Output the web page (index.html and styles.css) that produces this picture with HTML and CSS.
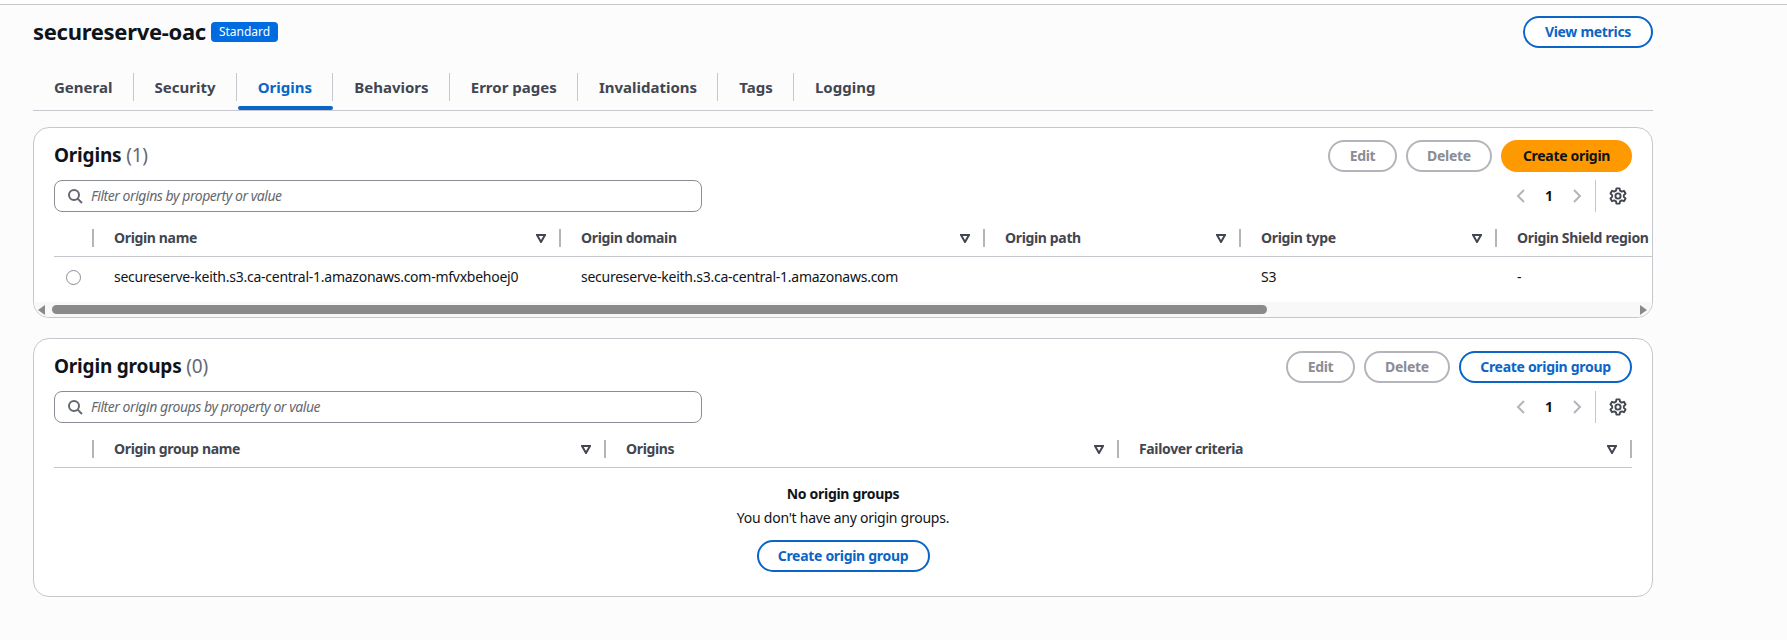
FILE: index.html
```html
<!DOCTYPE html>
<html lang="en">
<head>
    <meta charset="UTF-8">
    <title>secureserve-oac</title>
    <link rel="stylesheet" href="styles.css">
</head>
<body>
    <div class="top-line"></div>
    <div class="page">
        <div class="page-header">
            <div class="page-title">
                <h1>secureserve-oac</h1>
                <span class="badge">Standard</span>
            </div>
            <button class="btn btn-normal btn-metrics">View metrics</button>
        </div>

        <div class="tabs">
            <a class="tab">General</a>
            <a class="tab">Security</a>
            <a class="tab tab-active">Origins</a>
            <a class="tab">Behaviors</a>
            <a class="tab">Error pages</a>
            <a class="tab">Invalidations</a>
            <a class="tab">Tags</a>
            <a class="tab tab-last">Logging</a>
        </div>

        <!-- Origins -->
        <section class="card">
            <div class="card-head">
                <h2>Origins <span class="count">(1)</span></h2>
                <div class="actions">
                    <button class="btn btn-disabled btn-edit">Edit</button>
                    <button class="btn btn-disabled btn-delete">Delete</button>
                    <button class="btn btn-primary">Create origin</button>
                </div>
            </div>
            <div class="tools">
                <label class="filter">
                    <svg class="icon-search" viewBox="0 0 16 16"><circle cx="7" cy="7" r="5"/><path d="M10.6 10.6 15 15"/></svg>
                    <input type="text" placeholder="Filter origins by property or value">
                </label>
                <div class="pager">
                    <svg class="chevron" viewBox="0 0 16 16"><path d="M11 2 5 8l6 6"/></svg>
                    <span class="page-num">1</span>
                    <svg class="chevron" viewBox="0 0 16 16"><path d="m5 2 6 6-6 6"/></svg>
                    <span class="pager-sep"></span>
                    <svg class="icon-gear" viewBox="0 0 16 16"><path d="M6.6 1.2h2.800l.4 2 1.500.9 2-.7 1.400 2.400-1.500 1.400v1.600l1.500 1.400-1.400 2.400-2-.7-1.500.9-.4 2H6.600l-.4-2-1.500-.9-2 .7-1.400-2.400 1.500-1.400V7.200L1.300 5.800l1.400-2.400 2 .7 1.500-.9z"/><circle cx="8" cy="8" r="2.300"/></svg>
                </div>
            </div>
            <div class="table-wrap table-wrap-scroll">
                <div class="row-head grid-origins">
                    <div class="th"><span class="th-sep"></span></div>
                    <div class="th"><span class="th-label">Origin name</span><svg class="sort" viewBox="0 0 10 10"><path d="M1 2h8L5 9z"/></svg><span class="th-sep"></span></div>
                    <div class="th"><span class="th-label">Origin domain</span><svg class="sort" viewBox="0 0 10 10"><path d="M1 2h8L5 9z"/></svg><span class="th-sep"></span></div>
                    <div class="th"><span class="th-label">Origin path</span><svg class="sort" viewBox="0 0 10 10"><path d="M1 2h8L5 9z"/></svg><span class="th-sep"></span></div>
                    <div class="th"><span class="th-label">Origin type</span><svg class="sort" viewBox="0 0 10 10"><path d="M1 2h8L5 9z"/></svg><span class="th-sep"></span></div>
                    <div class="th"><span class="th-label">Origin Shield region</span></div>
                </div>
                <div class="row-body grid-origins">
                    <div class="td td-radio"><span class="radio"></span></div>
                    <div class="td">secureserve-keith.s3.ca-central-1.amazonaws.com-mfvxbehoej0</div>
                    <div class="td">secureserve-keith.s3.ca-central-1.amazonaws.com</div>
                    <div class="td"></div>
                    <div class="td">S3</div>
                    <div class="td">-</div>
                </div>
            </div>
            <div class="scrollbar">
                <span class="arrow arrow-left"></span>
                <span class="thumb"></span>
                <span class="arrow arrow-right"></span>
            </div>
        </section>

        <!-- Origin groups -->
        <section class="card">
            <div class="card-head">
                <h2>Origin groups <span class="count">(0)</span></h2>
                <div class="actions">
                    <button class="btn btn-disabled btn-edit">Edit</button>
                    <button class="btn btn-disabled btn-delete">Delete</button>
                    <button class="btn btn-normal btn-group">Create origin group</button>
                </div>
            </div>
            <div class="tools">
                <label class="filter">
                    <svg class="icon-search" viewBox="0 0 16 16"><circle cx="7" cy="7" r="5"/><path d="M10.6 10.6 15 15"/></svg>
                    <input type="text" placeholder="Filter origin groups by property or value">
                </label>
                <div class="pager">
                    <svg class="chevron" viewBox="0 0 16 16"><path d="M11 2 5 8l6 6"/></svg>
                    <span class="page-num">1</span>
                    <svg class="chevron" viewBox="0 0 16 16"><path d="m5 2 6 6-6 6"/></svg>
                    <span class="pager-sep"></span>
                    <svg class="icon-gear" viewBox="0 0 16 16"><path d="M6.6 1.2h2.800l.4 2 1.500.9 2-.7 1.400 2.400-1.500 1.400v1.600l1.500 1.400-1.400 2.400-2-.7-1.500.9-.4 2H6.600l-.4-2-1.500-.9-2 .7-1.400-2.400 1.500-1.400V7.200L1.300 5.800l1.400-2.400 2 .7 1.500-.9z"/><circle cx="8" cy="8" r="2.300"/></svg>
                </div>
            </div>
            <div class="table-wrap">
                <div class="row-head grid-groups">
                    <div class="th"><span class="th-sep"></span></div>
                    <div class="th"><span class="th-label">Origin group name</span><svg class="sort" viewBox="0 0 10 10"><path d="M1 2h8L5 9z"/></svg><span class="th-sep"></span></div>
                    <div class="th"><span class="th-label">Origins</span><svg class="sort" viewBox="0 0 10 10"><path d="M1 2h8L5 9z"/></svg><span class="th-sep"></span></div>
                    <div class="th"><span class="th-label">Failover criteria</span><svg class="sort" viewBox="0 0 10 10"><path d="M1 2h8L5 9z"/></svg><span class="th-sep"></span></div>
                </div>
                <div class="empty">
                    <div class="empty-title">No origin groups</div>
                    <div class="empty-text">You don't have any origin groups.</div>
                    <button class="btn btn-normal btn-group">Create origin group</button>
                </div>
            </div>
        </section>
    </div>
</body>
</html>
```

FILE: styles.css
```css
* {
    box-sizing: border-box;
}
body {
    margin: 0;
    height: 640px;
    overflow: hidden;
    background-color: #fcfcfd;
    color: #0f141a;
    font-family: "Noto Sans", Arial, sans-serif;
    font-size: 14px;
    letter-spacing: -0.25px;
}
.top-line {
    height: 5px;
    border-bottom: 1px solid #c6c6cd;
    background-color: #fff;
}
.page {
    width: 1653px;
    padding: 11px 0 0 33px;
}
.page-header {
    display: flex;
    justify-content: space-between;
    align-items: center;
    height: 32px;
}
.page-title {
    display: flex;
    align-items: center;
    gap: 5px;
}
h1 {
    margin: 0;
    padding-bottom: 2px;
    font-size: 22px;
    font-weight: 700;
    line-height: 30px;
    letter-spacing: -0.3px;
}
.badge {
    padding: 0 8px;
    height: 20px;
    line-height: 20px;
    border-radius: 4px;
    background-color: #006ce0;
    color: #fff;
    font-size: 12px;
    letter-spacing: 0;
}
.btn {
    height: 32px;
    padding: 0 0 2px;
    border-radius: 16px;
    background-color: #fff;
    font-family: inherit;
    font-size: 14px;
    font-weight: 700;
    letter-spacing: -0.3px;
    cursor: pointer;
}
.btn-normal {
    border: 2px solid #0a65c6;
    color: #0a65c6;
}
.btn-disabled {
    border: 2px solid #b4b4bb;
    color: #8c8c94;
}
.btn-primary {
    width: 131px;
    border: none;
    background-color: #ff9900;
    color: #0f141a;
}
.btn-metrics {
    width: 130px;
}
.btn-edit {
    width: 69px;
}
.btn-delete {
    width: 86px;
}
.btn-group {
    width: 173px;
}
.tabs {
    display: flex;
    margin-top: 25px;
    padding-bottom: 9px;
    border-bottom: 1px solid #c6c6cd;
}
.tab {
    position: relative;
    height: 28px;
    padding: 0 20.2px 0 21px;
    border-right: 1px solid #c6c6cd;
    color: #424650;
    font-size: 15px;
    font-weight: 700;
    line-height: 28px;
    letter-spacing: 0;
}
.tab-last {
    border-right: none;
}
.tab-active {
    color: #0a65c6;
}
.tab-active::after {
    content: "";
    position: absolute;
    left: 1px;
    right: -1px;
    bottom: -9px;
    height: 4px;
    border-radius: 2px;
    background-color: #0a65c6;
}
.card {
    margin-top: 16px;
    border: 1px solid #c6c6cd;
    border-radius: 16px;
    background-color: #fff;
    overflow: hidden;
}
.card + .card {
    margin-top: 20px;
}
.card-head {
    display: flex;
    justify-content: space-between;
    align-items: center;
    padding: 12px 20px 0;
}
h2 {
    margin: 0;
    padding-bottom: 2px;
    font-size: 19px;
    font-weight: 700;
    line-height: 30px;
    letter-spacing: -0.2px;
}
.count {
    color: #656871;
    font-weight: 400;
}
.actions {
    display: flex;
    gap: 9px;
}
.tools {
    display: flex;
    justify-content: space-between;
    margin-top: 8px;
    padding: 0 20px;
}
.filter {
    display: flex;
    align-items: center;
    gap: 8px;
    width: 648px;
    height: 32px;
    padding: 0 12px;
    border: 1px solid #8c8c94;
    border-radius: 8px;
    background-color: #fff;
}
.filter input {
    flex: 1;
    border: none;
    outline: none;
    padding: 0 0 2px;
    background: none;
    font-family: inherit;
    font-size: 14px;
    font-style: italic;
    letter-spacing: -0.45px;
}
.filter input::placeholder {
    color: #656871;
}
.icon-search {
    width: 16px;
    height: 16px;
    fill: none;
    stroke: #656871;
    stroke-width: 2;
}
.pager {
    display: flex;
    align-items: center;
    width: 119px;
}
.chevron {
    width: 16px;
    height: 16px;
    fill: none;
    stroke: #b4b4bb;
    stroke-width: 2;
}
.page-num {
    width: 40px;
    padding-bottom: 2px;
    text-align: center;
    font-size: 14px;
    font-weight: 700;
}
.pager-sep {
    width: 1px;
    height: 32px;
    margin: 0 14px 0 10px;
    background-color: #c6c6cd;
}
.icon-gear {
    width: 18px;
    height: 18px;
    margin-left: -1px;
    fill: none;
    stroke: #424650;
    stroke-width: 1.7;
    stroke-linejoin: round;
}
.table-wrap {
    margin: 12px 20px 0;
}
.table-wrap-scroll {
    margin-right: 0;
}
.grid-origins {
    display: grid;
    grid-template-columns: 40px 467px 424px 256px 256px 1fr;
}
.grid-groups {
    display: grid;
    grid-template-columns: 40px 512px 513px 513px;
}
.row-head {
    height: 33px;
    padding-bottom: 4px;
    border-bottom: 1px solid #c6c6cd;
}
.th {
    display: flex;
    align-items: center;
    justify-content: flex-end;
    min-width: 0;
    padding-left: 20px;
    color: #424650;
    font-size: 14px;
    font-weight: 700;
    letter-spacing: -0.35px;
    white-space: nowrap;
    overflow: hidden;
}
.th-label {
    flex: 1;
    padding-bottom: 2px;
}
.sort {
    width: 10px;
    height: 10px;
    margin-right: 13px;
    fill: none;
    stroke: #424650;
    stroke-width: 2;
}
.th-sep {
    width: 2px;
    height: 18px;
    background-color: #b4b4bb;
}
.row-body {
    height: 45px;
    padding-bottom: 5px;
}
.td {
    display: flex;
    align-items: center;
    padding: 0 0 2px 20px;
    white-space: nowrap;
}
.td-radio {
    padding: 0 0 0 12px;
}
.radio {
    width: 15px;
    height: 15px;
    border: 1px solid #8c8c94;
    border-radius: 50%;
}
.scrollbar {
    display: flex;
    align-items: center;
    height: 15px;
    padding: 0 5px 0 4px;
    background-color: #f8f8f8;
}
.arrow {
    width: 0;
    height: 0;
    border-top: 5px solid transparent;
    border-bottom: 5px solid transparent;
}
.arrow-left {
    border-right: 7px solid #8a8a8a;
}
.arrow-right {
    margin-left: auto;
    border-left: 7px solid #8a8a8a;
}
.thumb {
    width: 1215px;
    height: 9px;
    margin-left: 7px;
    border-radius: 5px;
    background-color: #8a8a8a;
}
.empty {
    display: flex;
    flex-direction: column;
    align-items: center;
    padding: 16px 0 24px;
}
.empty-title {
    font-weight: 700;
    line-height: 20px;
    letter-spacing: -0.3px;
}
.empty-text {
    margin-top: 4px;
    line-height: 20px;
}
.empty .btn {
    margin-top: 12px;
}
```
